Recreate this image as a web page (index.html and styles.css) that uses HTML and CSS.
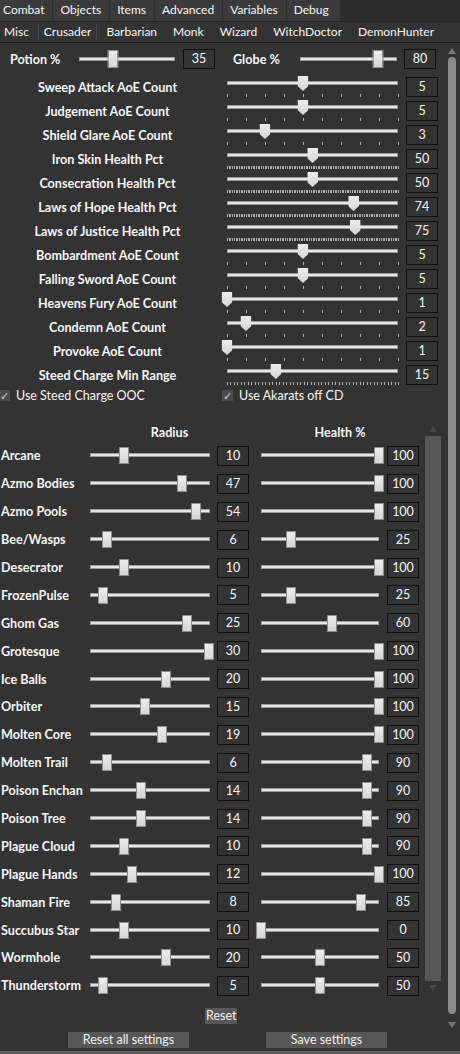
FILE: index.html
```html
<!DOCTYPE html>
<html lang="en">
<head>
    <meta charset="UTF-8">
    <meta name="viewport" content="width=device-width, initial-scale=1.0">
    <title>Crusader Settings</title>
    <link rel="stylesheet" href="styles.css">
</head>
<body>
    <div class="tabs main-tabs">
        <span class="tab">Combat</span>
        <span class="tab">Objects</span>
        <span class="tab">Items</span>
        <span class="tab">Advanced</span>
        <span class="tab">Variables</span>
        <span class="tab">Debug</span>
    </div>
    <div class="tabs sub-tabs">
        <span class="tab sep">Misc</span>
        <span class="tab sep">Crusader</span>
        <span class="tab">Barbarian</span>
        <span class="tab">Monk</span>
        <span class="tab">Wizard</span>
        <span class="tab">WitchDoctor</span>
        <span class="tab">DemonHunter</span>
    </div>

    <div class="page">
        <div class="panel">
            <div class="top-row">
                <span class="top-label potion">Potion %</span>
                <div class="slider potion-slider"><span class="track"></span><span class="thumb rect" style="left:35%"></span></div>
                <div class="num">35</div>
                <span class="top-label globe">Globe %</span>
                <div class="slider globe-slider"><span class="track"></span><span class="thumb rect" style="left:80%"></span></div>
                <div class="num globe-num">80</div>
            </div>

            <div id="settings"></div>

            <div class="checks">
                <label class="check first"><span class="box">&#10003;</span>Use Steed Charge OOC</label>
                <label class="check second"><span class="box">&#10003;</span>Use Akarats off CD</label>
            </div>

            <div class="mobs">
                <div class="mob-list" id="mobs">
                    <div class="mob-head">
                        <span class="head-radius">Radius</span>
                        <span class="head-health">Health %</span>
                    </div>
                    <!-- rows are filled by the script below -->
                </div>
                <div class="inner-scroll">
                    <span class="arrow up"></span>
                    <span class="bar"></span>
                    <span class="arrow down"></span>
                </div>
            </div>

            <div class="reset-row"><button class="btn">Reset</button></div>
            <div class="btn-row">
                <button class="btn wide">Reset all settings</button>
                <button class="btn wide">Save settings</button>
            </div>
        </div>
        <div class="vscroll">
            <span class="arrow up"></span>
            <span class="bar"></span>
            <span class="arrow down"></span>
        </div>
    </div>
    <div class="status-line"></div>

    <script>
        // name, value, min, max
        const settings = [
            ['Sweep Attack AoE Count', 5, 1, 10],
            ['Judgement AoE Count', 5, 1, 10],
            ['Shield Glare AoE Count', 3, 1, 10],
            ['Iron Skin Health Pct', 50, 0, 100],
            ['Consecration Health Pct', 50, 0, 100],
            ['Laws of Hope Health Pct', 74, 0, 100],
            ['Laws of Justice Health Pct', 75, 0, 100],
            ['Bombardment AoE Count', 5, 1, 10],
            ['Falling Sword AoE Count', 5, 1, 10],
            ['Heavens Fury AoE Count', 1, 1, 10],
            ['Condemn AoE Count', 2, 1, 10],
            ['Provoke AoE Count', 1, 1, 10],
            ['Steed Charge Min Range', 15, 1, 50]
        ];

        // name, radius, radius slider position (%), health %
        const mobs = [
            ['Arcane', 10, 28.3, 100],
            ['Azmo Bodies', 47, 76.7, 100],
            ['Azmo Pools', 54, 88.3, 100],
            ['Bee/Wasps', 6, 14.2, 25],
            ['Desecrator', 10, 28.3, 100],
            ['FrozenPulse', 5, 10.8, 25],
            ['Ghom Gas', 25, 80.8, 60],
            ['Grotesque', 30, 99, 100],
            ['Ice Balls', 20, 63.3, 100],
            ['Orbiter', 15, 45.8, 100],
            ['Molten Core', 19, 60, 100],
            ['Molten Trail', 6, 14.2, 90],
            ['Poison Enchan', 14, 42.5, 90],
            ['Poison Tree', 14, 42.5, 90],
            ['Plague Cloud', 10, 28.3, 90],
            ['Plague Hands', 12, 35, 100],
            ['Shaman Fire', 8, 21.7, 85],
            ['Succubus Star', 10, 28.3, 0],
            ['Wormhole', 20, 63.3, 50],
            ['Thunderstorm', 5, 10.8, 50]
        ];

        function createSettingRows() {
            const box = document.getElementById('settings');
            settings.forEach(function (s) {
                const pos = (s[1] - s[2]) / (s[3] - s[2]) * 100;
                const gap = 171 / (s[3] - s[2]);
                const row = document.createElement('div');
                row.className = 'set-row';
                row.innerHTML = `
                    <span class="set-label">${s[0]}</span>
                    <div class="slider set-slider">
                        <span class="track"></span>
                        <span class="ticks" style="--gap:${gap}px"></span>
                        <span class="thumb pointer" style="left:${pos}%"></span>
                    </div>
                    <div class="num">${s[1]}</div>
                `;
                box.appendChild(row);
            });
        }

        function createMobRows() {
            const list = document.getElementById('mobs');
            mobs.forEach(function (m) {
                const row = document.createElement('div');
                row.className = 'mob-row';
                row.innerHTML = `
                    <span class="mob-label">${m[0]}</span>
                    <div class="slider radius-slider"><span class="track"></span><span class="thumb block" style="left:${m[2]}%"></span></div>
                    <div class="num radius-num">${m[1]}</div>
                    <div class="slider health-slider"><span class="track"></span><span class="thumb block" style="left:${m[3]}%"></span></div>
                    <div class="num health-num">${m[3]}</div>
                `;
                list.appendChild(row);
            });
        }

        createSettingRows();
        createMobRows();
    </script>
</body>
</html>
```

FILE: styles.css
```css
body {
    font-family: 'Segoe UI', Lato, 'Liberation Sans', sans-serif;
    font-size: 12px;
    color: #f6f6f6;
    background-color: #333;
    margin: 0;
    overflow: hidden;
}
.tabs {
    display: flex;
    align-items: center;
}
.main-tabs {
    height: 21px;
    border-bottom: 1px solid #252525;
    background-color: #2e2e2e;
}
.main-tabs .tab {
    height: 21px;
    line-height: 20px;
    padding: 0 8px 0 3px;
    background-color: #3b3b3b;
    margin-right: 1px;
}
.main-tabs .tab + .tab {
    padding-left: 7px;
}
.main-tabs .tab:last-child {
    padding-right: 11px;
}
.sub-tabs {
    height: 20px;
    border-bottom: 1px solid #1c1c1c;
}
.sub-tabs .tab {
    line-height: 20px;
    padding: 0 8px;
}
.sub-tabs .sep {
    line-height: 16px;
    border-right: 1px solid #4a4a4a;
}
.sub-tabs .tab:first-child {
    padding: 0 9px 0 4px;
}
.sub-tabs .sep + .sep {
    padding: 0 5px;
    margin-right: 1px;
}
.page {
    display: flex;
}
.panel {
    width: 447px;
}
.num {
    width: 30px;
    height: 18px;
    border: 1px solid #0f0f0f;
    text-align: center;
    line-height: 18px;
    font-size: 12.5px;
    flex-shrink: 0;
}

/* sliders */
.slider {
    position: relative;
    flex-shrink: 0;
}
.track {
    position: absolute;
    left: 0;
    right: 0;
    height: 2px;
    background-color: #e6e6e6;
    border: 1px solid #9b9b9b;
}
.thumb {
    position: absolute;
    top: 0;
    background: linear-gradient(#ececec, #d6d6d6);
    transform: translateX(-50%);
}
.thumb.rect {
    width: 9px;
    height: 16px;
    border: 1px solid #8d8d8d;
}
.thumb.block {
    width: 8px;
    height: 15px;
    border: 1px solid #8d8d8d;
}
.thumb.pointer {
    width: 11px;
    height: 15px;
    clip-path: polygon(0 0, 100% 0, 100% 66%, 50% 100%, 0 66%);
}
.ticks {
    position: absolute;
    left: 0;
    top: 18px;
    width: 172px;
    height: 3px;
    background: repeating-linear-gradient(to right, #b0b0b0 0 1px, transparent 1px var(--gap));
}

.top-row {
    display: flex;
    align-items: center;
    height: 20px;
    margin-top: 6px;
}
.top-label, .set-label, .mob-label, .mob-head {
    font-weight: bold;
    font-size: 12.6px;
}
.top-label {
    flex-shrink: 0;
}
.potion {
    width: 69px;
    padding-left: 10px;
}
.globe {
    width: 67px;
    margin-left: 18px;
}
.potion-slider, .globe-slider {
    height: 18px;
}
.potion-slider {
    width: 96px;
    margin-right: 8px;
}
.globe-slider {
    width: 97px;
    margin-right: 7px;
}
.potion-slider .track, .globe-slider .track {
    top: 7px;
}

#settings {
    margin-top: 7px;
}
.set-row {
    display: flex;
    height: 24px;
}
.set-label {
    width: 215px;
    text-align: center;
    line-height: 24px;
    flex-shrink: 0;
}
.set-slider {
    width: 171px;
    height: 24px;
    margin-left: 12px;
    margin-right: 8px;
}
.set-slider .track {
    top: 5px;
}
.set-row .num {
    margin-top: 1px;
}

.checks {
    display: flex;
    height: 15px;
    align-items: center;
    font-size: 12.5px;
}
.check {
    display: flex;
    align-items: center;
}
.check .box {
    width: 11px;
    height: 11px;
    background-color: #4c4c4c;
    color: #cfcfcf;
    font-size: 11px;
    line-height: 11px;
    text-align: center;
    margin-right: 6px;
}
.check.first {
    margin-left: -1px;
    width: 223px;
}

.mobs {
    display: flex;
    margin-top: 16px;
}
.mob-list {
    width: 424px;
}
.mob-head {
    display: flex;
    height: 18px;
    padding-top: 5px;
    line-height: 18px;
}
.head-radius {
    width: 159px;
    margin-left: 90px;
    text-align: center;
}
.head-health {
    width: 158px;
    margin-left: 12px;
    text-align: center;
}
.mob-row {
    display: flex;
    align-items: center;
    height: 27.9px;
}
.mob-label {
    width: 89px;
    padding-left: 1px;
    flex-shrink: 0;
}
.radius-slider, .health-slider {
    height: 17px;
}
.radius-slider .track, .health-slider .track {
    top: 6px;
}
.radius-slider {
    width: 120px;
}
.radius-num {
    margin-left: 7px;
}
.health-slider {
    width: 118px;
    margin-left: 12px;
}
.health-num {
    margin-left: 8px;
}

.inner-scroll {
    width: 17px;
    display: flex;
    flex-direction: column;
    align-items: center;
    padding-top: 7px;
    height: 565px;
}
.inner-scroll .bar {
    width: 16px;
    flex: 1;
    background-color: #575757;
    margin: 4px 0 4px;
}
.inner-scroll .arrow.up {
    border-bottom-color: #474747;
}
.inner-scroll .arrow.down {
    border-top-color: #474747;
}
.arrow {
    width: 0;
    height: 0;
    border-left: 4px solid transparent;
    border-right: 4px solid transparent;
}
.arrow.up {
    border-bottom: 6px solid #767676;
}
.arrow.down {
    border-top: 6px solid #767676;
}

.reset-row {
    display: flex;
    margin-top: 8px;
    padding-left: 205px;
}
.btn {
    font-family: inherit;
    font-size: 12.5px;
    color: #f2f2f2;
    background-color: #575757;
    border: none;
    padding: 0 1px;
    height: 16px;
    line-height: 16px;
}
.btn-row {
    display: flex;
    margin-top: 8px;
    padding-left: 68px;
    gap: 77px;
}
.btn.wide {
    width: 121px;
}

.vscroll {
    width: 9px;
    display: flex;
    flex-direction: column;
    align-items: center;
    padding-top: 5px;
    height: 980px;
}
.vscroll .bar {
    width: 8px;
    flex: 1;
    background-color: #8a8a8a;
    border-radius: 4px;
    margin: 3px 0 8px;
}
.status-line {
    height: 3px;
    margin-top: 3px;
    background-color: #5c5c5c;
}
```
